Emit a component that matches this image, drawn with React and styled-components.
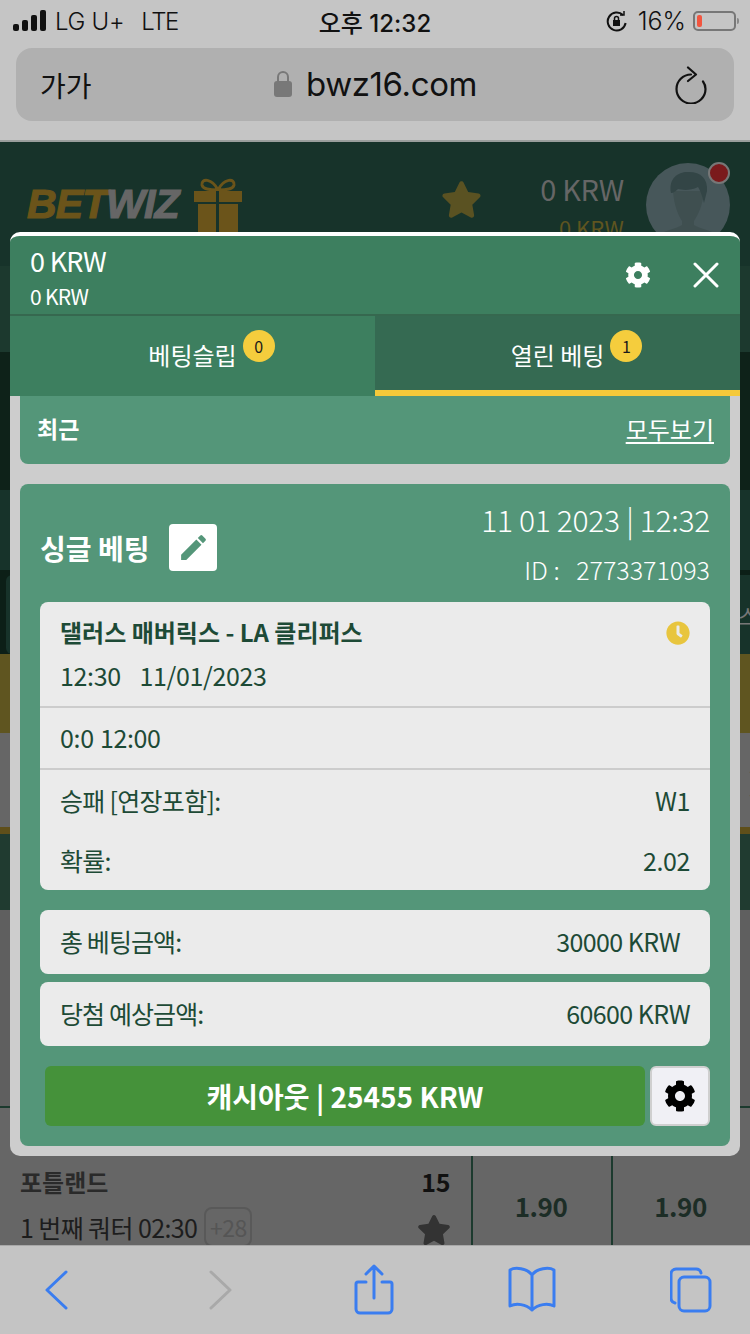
import React from "react";
import styled, { createGlobalStyle } from "styled-components";
import { FaCog, FaStar, FaClock } from "react-icons/fa";
import { MdEdit } from "react-icons/md";

const KR = `"Noto Sans CJK KR", "Noto Sans", sans-serif`;
const IOS = `Inter, "Noto Sans CJK KR", sans-serif`;
const BLUE = "#3a7df0";

const Global = createGlobalStyle`
  html, body { margin: 0; padding: 0; background: #666; }
  * { box-sizing: border-box; }
`;

const Screen = styled.div`
  position: relative;
  width: 750px;
  height: 1334px;
  display: flex;
  flex-direction: column;
  overflow: hidden;
  font-family: ${KR};
`;

/* ---------- safari chrome ---------- */
const Chrome = styled.div`
  height: 142px;
  flex: none;
  background: #c5c5c5;
  border-bottom: 2px solid #9a9e9c;
  padding: 0 16px;
  font-family: ${IOS};
  color: #111;
`;
const StatusBar = styled.div`
  height: 48px;
  display: grid;
  grid-template-columns: 1fr auto 1fr;
  align-items: center;
  padding-bottom: 6px;
  font-size: 24px;
`;
const StatusLeft = styled.div`
  display: flex;
  align-items: center;
  margin-left: -3px;
  gap: 9px;
  font-weight: 300;
`;
const Carrier = styled.span`
  letter-spacing: -0.3px;
  margin-right: 8px;
`;
const Network = styled.span`
  letter-spacing: -1.4px;
`;
const Clock = styled.div`
  font-weight: 500;
  font-size: 24px;
`;
const StatusRight = styled.div`
  display: flex;
  align-items: center;
  justify-content: flex-end;
  gap: 7px;
  margin-right: -2px;
  font-weight: 300;
  font-size: 25px;
`;
const RotationLock = styled.svg`
  margin-right: 4px;
`;
const Battery = styled.div`
  position: relative;
  width: 43px;
  height: 20px;
  border: 2px solid #777;
  border-radius: 5px;
  padding: 2px;
  &::after {
    content: "";
    position: absolute;
    right: -5px;
    top: 5px;
    width: 2px;
    height: 6px;
    background: #888;
    border-radius: 0 2px 2px 0;
  }
`;
const BatteryLevel = styled.div`
  width: 5px;
  height: 100%;
  background: #f2553f;
  border-radius: 2px;
`;
const UrlBar = styled.div`
  height: 73px;
  background: #b0b0b0;
  border-radius: 16px;
  display: flex;
  align-items: center;
  justify-content: space-between;
  padding: 0 27px 0 24px;
`;
const TextSize = styled.span`
  font-family: ${KR};
  font-size: 28px;
  white-space: nowrap;
  width: 50px;
  flex: none;
`;
const Address = styled.div`
  display: flex;
  align-items: center;
  gap: 14px;
  font-size: 33px;
  font-weight: 400;
  letter-spacing: -0.4px;
  margin: -2px 14px 0 0;
`;

/* ---------- dimmed page behind the modal ---------- */
const Backdrop = styled.div`
  flex: 1;
  min-height: 0;
  overflow: hidden;
  display: flex;
  flex-direction: column;
`;
const Band = styled.div`
  flex: none;
  height: ${(p) => p.$h}px;
  background: ${(p) => p.$bg};
  display: flex;
  overflow: hidden;
  justify-content: ${(p) => p.$end ? "flex-end" : "flex-start"};
  align-items: ${(p) => p.$end ? "center" : "stretch"};
`;
const SiteHeader = styled.div`
  height: 124px;
  flex: none;
  background: #17332a;
  display: flex;
  padding: 36px 20px 0 27px;
  position: relative;
`;
const Logo = styled.div`
  font-family: "Liberation Sans", sans-serif;
  font-style: italic;
  font-weight: 700;
  font-size: 41px;
  line-height: 52px;
  letter-spacing: -0.9px;
  color: #666;
  -webkit-text-stroke: 1.2px currentColor;
  height: 52px;
`;
const LogoAccent = styled.span`
  color: #6b541a;
`;
const GiftIcon = styled.svg`
  width: 50px;
  height: 54px;
  margin-left: 14px;
  flex: none;
`;
const HeadStar = styled.div`
  color: #5a5222;
  font-size: 41px;
  line-height: 1;
  margin-left: 198px;
  margin-top: 1px;
  flex: none;
`;
const Balance = styled.div`
  width: 142px;
  text-align: right;
  flex: none;
  margin-top: -5px;
`;
const BalanceMain = styled.div`
  font-size: 29px;
  line-height: 30px;
  letter-spacing: -0.4px;
  color: #666;
`;
const BalanceSub = styled.div`
  font-size: 22px;
  line-height: 30px;
  margin-top: 9px;
  color: #5f5520;
`;
const Avatar = styled.div`
  position: relative;
  width: 84px;
  height: 84px;
  margin: -15px 0 0 22px;
  flex: none;
`;
const Dot = styled.div`
  position: absolute;
  top: -1px;
  right: 0;
  width: 22px;
  height: 22px;
  border-radius: 50%;
  background: #7a1a1c;
  border: 2px solid #777;
`;
const SideBox = styled.div`
  flex: 1;
  margin: 5px 0 0 6px;
  background: #17332a;
  border-radius: 6px 0 0 6px;
  display: flex;
  justify-content: flex-end;
  align-items: center;
  color: #777;
  font-size: 22px;
`;
const Clipped = styled.span`
  margin-right: -8px;
  color: ${(p) => p.$color || "inherit"};
  font-size: ${(p) => p.$size || 22}px;
`;
const GameRow = styled.div`
  flex: none;
  height: 137px;
  background: #666;
  display: grid;
  grid-template-columns: 471px 140px 139px;
`;
const GameInfo = styled.div`
  display: grid;
  grid-template-columns: 1fr auto;
  grid-auto-rows: 46px;
  align-items: center;
  padding: 51px 21px 0 20px;
  margin-top: -1px;
  color: #1d1d1d;
  font-size: 25px;
`;
const GameName = styled.div`
  font-weight: 700;
  font-size: 24px;
  color: #2a2a2a;
`;
const GameScore = styled.div`
  font-weight: 700;
  font-size: 25px;
  letter-spacing: -0.4px;
  color: #111;
  text-align: right;
`;
const GameTime = styled.div`
  display: flex;
  align-items: center;
  gap: 7px;
  letter-spacing: -0.6px;
  white-space: nowrap;
`;
const More = styled.span`
  border: 2px solid #595959;
  color: #555;
  border-radius: 8px;
  padding: 0 2px;
  font-size: 23px;
  line-height: 36px;
  height: 40px;
  width: 48px;
  text-align: center;
`;
const RowStar = styled.div`
  color: #333;
  font-size: 34px;
  line-height: 1;
  margin: 8px -1px 0 0;
`;
const Odd = styled.div`
  border-left: 2px solid #1c3a2e;
  display: flex;
  justify-content: center;
  font-weight: 700;
  font-size: 26px;
  letter-spacing: -0.5px;
  color: #1c2d26;
  padding-top: 80px;
  padding-right: 2px;
  line-height: 36px;
`;

/* ---------- bottom toolbar ---------- */
const Toolbar = styled.div`
  height: 89px;
  flex: none;
  background: #c4c4c4;
  border-top: 1px solid #a8a8a8;
  display: flex;
  align-items: center;
  justify-content: space-between;
  padding: 0 36px 0 36px;
`;
const ToolIcon = styled.svg`
  width: ${(p) => p.$w || 44}px;
  height: 52px;
  fill: none;
  stroke: ${(p) => p.$muted ? "#a9a9a9" : BLUE};
  stroke-width: 3;
  stroke-linecap: round;
  stroke-linejoin: round;
`;

/* ---------- modal ---------- */
const Modal = styled.div`
  position: absolute;
  left: 10px;
  top: 232px;
  width: 730px;
  height: 924px;
  background: #cdcdcd;
  border-top: 4px solid #fff;
  border-radius: 10px;
  overflow: hidden;
  display: flex;
  flex-direction: column;
`;
const ModalHead = styled.div`
  height: 78px;
  flex: none;
  background: #3d7f5f;
  color: #fff;
  display: flex;
  align-items: center;
  justify-content: space-between;
  padding: 0 21px 0 20px;
`;
const HeadBalance = styled.div`
  padding-top: 6px;
`;
const HeadMain = styled.div`
  font-size: 27px;
  line-height: 32px;
  letter-spacing: -0.7px;
  margin-top: -2px;
`;
const HeadSub = styled.div`
  font-size: 21px;
  line-height: 26px;
  letter-spacing: -0.7px;
  margin-top: 6px;
`;
const HeadActions = styled.div`
  display: flex;
  align-items: center;
  gap: 42px;
  margin-top: -1px;
  font-size: 26px;
  line-height: 0;
`;
const Tabs = styled.div`
  height: 82px;
  flex: none;
  display: grid;
  grid-template-columns: 1fr 1fr;
`;
const Tab = styled.div`
  background: ${(p) => p.$active ? "#356a52" : "#3d7f5f"};
  border-top: 2px solid #36684f;
  border-bottom: 6px solid ${(p) => p.$active ? "#f5c93a" : "#3d7f5f"};
  color: #fff;
  font-size: 24px;
  display: flex;
  justify-content: center;
  padding-top: 21px;
`;
const TabLabel = styled.span`
  position: relative;
  height: 36px;
  line-height: 36px;
`;
const Badge = styled.span`
  position: absolute;
  left: calc(100% + 6px);
  top: -7px;
  width: 32px;
  height: 32px;
  border-radius: 50%;
  background: #f5cd3d;
  color: #1a1a1a;
  font-size: 16px;
  display: flex;
  align-items: center;
  justify-content: center;
`;
const Body = styled.div`
  flex: 1;
  padding: 0 10px 10px;
  display: flex;
  flex-direction: column;
  gap: 20px;
`;
const RecentBar = styled.div`
  height: 68px;
  flex: none;
  background: #549679;
  border-radius: 0 0 8px 8px;
  color: #fff;
  display: flex;
  align-items: center;
  justify-content: space-between;
  padding: 0 16px 4px 17px;
`;
const RecentTitle = styled.span`
  font-weight: 700;
  font-size: 23px;
`;
const RecentLink = styled.a`
  font-size: 24px;
  text-decoration: underline;
  text-underline-offset: 3px;
`;
const BetCard = styled.div`
  flex: 1;
  background: #549679;
  border-radius: 8px;
  padding: 0 20px;
  display: flex;
  flex-direction: column;
`;
const BetHead = styled.div`
  height: 118px;
  flex: none;
  display: flex;
  justify-content: space-between;
  align-items: flex-start;
  color: #fff;
`;
const BetTitleRow = styled.div`
  display: flex;
  align-items: center;
  gap: 20px;
  margin-top: 40px;
`;
const BetTitle = styled.span`
  font-weight: 700;
  font-size: 28px;
`;
const EditButton = styled.div`
  width: 48px;
  height: 47px;
  border-radius: 4px;
  background: #fff;
  color: #549679;
  font-size: 33px;
  display: flex;
  align-items: center;
  justify-content: center;
`;
const BetMeta = styled.div`
  text-align: right;
  padding-top: 14px;
`;
const BetDate = styled.div`
  font-size: 30px;
  line-height: 42px;
  letter-spacing: -0.3px;
  font-weight: 300;
`;
const BetId = styled.div`
  font-size: 25px;
  line-height: 36px;
  margin-top: 11px;
  font-weight: 300;
  white-space: pre;
`;
const InfoCard = styled.div`
  height: 288px;
  flex: none;
  background: #ebebeb;
  border-radius: 8px;
  color: #1d4a36;
  display: flex;
  flex-direction: column;
`;
const InfoSection = styled.div`
  padding: 0 20px;
  height: ${(p) => p.$h}px;
  flex: none;
  border-bottom: ${(p) => p.$line ? "2px solid #cccccc" : "0"};
`;
const MatchRow = styled.div`
  display: flex;
  justify-content: space-between;
  align-items: center;
  height: 58px;
`;
const MatchName = styled.span`
  font-weight: 700;
  font-size: 24px;
`;
const ClockIcon = styled.span`
  font-size: 24px;
  line-height: 0;
  margin-top: 3px;
  color: #e8c53e;
`;
const InfoLine = styled.div`
  font-size: 25px;
  line-height: ${(p) => p.$lh}px;
  letter-spacing: -0.35px;
  word-spacing: 1px;
  white-space: pre;
`;
const PairRow = styled.div`
  display: flex;
  justify-content: space-between;
  align-items: center;
  height: ${(p) => p.$h}px;
  font-size: 25px;
  letter-spacing: -0.4px;
`;
const PairLabel = styled.span`
  letter-spacing: -0.7px;
`;
const AmountCard = styled.div`
  height: 64px;
  flex: none;
  margin-top: ${(p) => p.$mt}px;
  background: #ebebeb;
  border-radius: 8px;
  color: #1d4a36;
  display: flex;
  justify-content: space-between;
  align-items: center;
  font-size: 25px;
  letter-spacing: -0.6px;
  padding: 0 ${(p) => p.$pr}px 2px 20px;
`;
const AmountLabel = styled.span`
  letter-spacing: -0.9px;
`;
const ActionRow = styled.div`
  display: flex;
  gap: 5px;
  margin: 20px 0 0 5px;
`;
const CashoutButton = styled.button`
  width: 600px;
  height: 60px;
  border: 0;
  border-radius: 6px;
  background: #45923a;
  color: #fff;
  font-family: ${KR};
  font-weight: 700;
  font-size: 28px;
  padding: 0;
`;
const CogButton = styled.button`
  width: 60px;
  height: 60px;
  border: 2px solid #cfcfcf;
  border-radius: 6px;
  background: #f0f0f5;
  color: #000;
  font-size: 32px;
  display: flex;
  align-items: center;
  justify-content: center;
  padding: 0;
`;

export default function App() {
  return (
    <Screen>
      <Global />
      <Chrome>
        <StatusBar>
          <StatusLeft>
            <svg width="33" height="22" viewBox="0 0 33 22" fill="#111">
              <rect x="0" y="14" width="6" height="7" rx="2" />
              <rect x="9" y="10" width="6" height="11" rx="2" />
              <rect x="18" y="5" width="6" height="16" rx="2" />
              <rect x="27" y="0" width="6" height="21" rx="2" />
            </svg>
            <Carrier>LG U+</Carrier>
            <Network>LTE</Network>
          </StatusLeft>
          <Clock>오후 12:32</Clock>
          <StatusRight>
            <RotationLock width="21" height="22" viewBox="0 0 21 22" fill="none" stroke="#111" strokeWidth="2">
              <path d="M17 5a9 9 0 1 0 2.6 8" />
              <path d="M14 5h4V1" strokeWidth="1.5" />
              <rect x="7" y="10" width="7" height="6" fill="#111" stroke="none" />
              <path d="M8.5 10V8.5a2 2 0 0 1 4 0V10" strokeWidth="1.5" />
            </RotationLock>
            <span>16%</span>
            <Battery>
              <BatteryLevel />
            </Battery>
          </StatusRight>
        </StatusBar>
        <UrlBar>
          <TextSize>가가</TextSize>
          <Address>
            <svg width="18" height="28" viewBox="0 0 18 28">
              <path d="M4 13V7a5 5 0 0 1 10 0v6" fill="none" stroke="#787878" strokeWidth="2" />
              <rect x="0" y="11" width="18" height="16" rx="3" fill="#787878" />
            </svg>
            <span>bwz16.com</span>
          </Address>
          <svg width="32" height="38" viewBox="0 0 32 38" fill="none" stroke="#111" strokeWidth="2.2" strokeLinecap="round" strokeLinejoin="round">
            <path d="M16 8.5a14.5 14.5 0 1 0 14.5 14.5c0-3-1-5.5-2.5-7.5" />
            <path d="M13 1.5l8 7-8 6.5" />
          </svg>
        </UrlBar>
      </Chrome>

      <Backdrop>
        <SiteHeader>
          <Logo>
            <LogoAccent>BET</LogoAccent>WIZ
          </Logo>
          <GiftIcon viewBox="0 0 50 54">
            <path d="M25 12C19 0 8 0 9 7c1 5 10 5 16 5zm0 0C31 0 42 0 41 7c-1 5-10 5-16 5z" fill="none" stroke="#6b541a" strokeWidth="3" />
            <rect x="1" y="13" width="48" height="11" fill="#6b541a" />
            <rect x="5" y="26" width="40" height="28" fill="#6b541a" />
            <rect x="23" y="13" width="3" height="41" fill="#17332a" />
          </GiftIcon>
          <HeadStar>
            <FaStar />
          </HeadStar>
          <Balance>
            <BalanceMain>0 KRW</BalanceMain>
            <BalanceSub>0 KRW</BalanceSub>
          </Balance>
          <Avatar>
            <svg width="84" height="84" viewBox="0 0 84 84">
              <circle cx="42" cy="42" r="42" fill="#47575a" />
              <path d="M27 28c1 14 5 24 9 30v4c-6 4-16 5-22 9a42 42 0 0 0 56 0c-6-4-16-5-22-9v-4c4-6 9-16 10-30z" fill="#3f4f50" />
              <path d="M25 30C22 14 34 8 43 9c12 0 19 7 18 19l-3 12c-2-8-4-13-6-16-8 4-16 3-20 2-4 4-6 4-7 4z" fill="#334546" />
            </svg>
            <Dot />
          </Avatar>
        </SiteHeader>
        <Band $h={86} $bg="#1c392e" />
        <Band $h={138} $bg="#0e2219" />
        <Band $h={80} $bg="#17332a" />
        <Band $h={84} $bg="#0c1f17">
          <SideBox>
            <Clipped>스</Clipped>
          </SideBox>
        </Band>
        <Band $h={79} $bg="#5f5520" />
        <Band $h={94} $bg="#666666" $end>
          <Clipped $color="#222" $size={26}>]</Clipped>
        </Band>
        <Band $h={7} $bg="#5f4f1a" />
        <Band $h={76} $bg="#203b30" />
        <Band $h={196} $bg="#5f5f5f" />
        <Band $h={2} $bg="#1c3a2e" />
        <GameRow>
          <GameInfo>
            <GameName>포틀랜드</GameName>
            <GameScore>15</GameScore>
            <GameTime>
              1 번째 쿼터 02:30 <More>+28</More>
            </GameTime>
            <RowStar>
              <FaStar />
            </RowStar>
          </GameInfo>
          <Odd>1.90</Odd>
          <Odd>1.90</Odd>
        </GameRow>
      </Backdrop>

      <Toolbar>
        <ToolIcon viewBox="0 0 44 52">
          <path d="M30 8L11 26l19 18" />
        </ToolIcon>
        <ToolIcon viewBox="-4 0 44 52" $muted>
          <path d="M14 8l19 18-19 18" />
        </ToolIcon>
        <ToolIcon viewBox="-2 0 44 52">
          <path d="M14 18H6a2 2 0 0 0-2 2v25a4 4 0 0 0 4 4h28a4 4 0 0 0 4-4V20a2 2 0 0 0-2-2h-8" />
          <path d="M22 34V2M14 10l8-8 8 8" />
        </ToolIcon>
        <ToolIcon viewBox="0 0 50 52" $w={50}>
          <path d="M25 11C20 4 8 3 3 6v36c6-3 16-2 22 4 6-6 16-7 22-4V6c-5-3-17-2-22 5zM25 11v35" />
        </ToolIcon>
        <ToolIcon viewBox="2 0 44 52">
          <path d="M33 9a5 5 0 0 0-5-4H8a5 5 0 0 0-5 5v24a5 5 0 0 0 4 5" />
          <rect x="11" y="13" width="31" height="34" rx="5" />
        </ToolIcon>
      </Toolbar>

      <Modal>
        <ModalHead>
          <HeadBalance>
            <HeadMain>0 KRW</HeadMain>
            <HeadSub>0 KRW</HeadSub>
          </HeadBalance>
          <HeadActions>
            <FaCog />
            <svg width="26" height="26" viewBox="0 0 26 26" stroke="#fff" strokeWidth="3" strokeLinecap="round">
              <path d="M2 2l22 22M24 2L2 24" />
            </svg>
          </HeadActions>
        </ModalHead>
        <Tabs>
          <Tab>
            <TabLabel>
              베팅슬립
              <Badge>0</Badge>
            </TabLabel>
          </Tab>
          <Tab $active>
            <TabLabel>
              열린 베팅
              <Badge>1</Badge>
            </TabLabel>
          </Tab>
        </Tabs>
        <Body>
          <RecentBar>
            <RecentTitle>최근</RecentTitle>
            <RecentLink>모두보기</RecentLink>
          </RecentBar>
          <BetCard>
            <BetHead>
              <BetTitleRow>
                <BetTitle>싱글 베팅</BetTitle>
                <EditButton>
                  <MdEdit />
                </EditButton>
              </BetTitleRow>
              <BetMeta>
                <BetDate>11 01 2023 | 12:32</BetDate>
                <BetId>{"ID :   2773371093"}</BetId>
              </BetMeta>
            </BetHead>
            <InfoCard>
              <InfoSection $h={106} $line>
                <MatchRow>
                  <MatchName>댈러스 매버릭스 - LA 클리퍼스</MatchName>
                  <ClockIcon>
                    <FaClock />
                  </ClockIcon>
                </MatchRow>
                <InfoLine $lh={30}>{"12:30   11/01/2023"}</InfoLine>
              </InfoSection>
              <InfoSection $h={62} $line>
                <InfoLine $lh={58}>0:0 12:00</InfoLine>
              </InfoSection>
              <InfoSection $h={120}>
                <PairRow $h={60}>
                  <PairLabel>승패 [연장포함]:</PairLabel>
                  <span>W1</span>
                </PairRow>
                <PairRow $h={60}>
                  <PairLabel>확률:</PairLabel>
                  <span>2.02</span>
                </PairRow>
              </InfoSection>
            </InfoCard>
            <AmountCard $mt={20} $pr={30}>
              <AmountLabel>총 베팅금액:</AmountLabel>
              <span>30000 KRW</span>
            </AmountCard>
            <AmountCard $mt={8} $pr={20}>
              <AmountLabel>당첨 예상금액:</AmountLabel>
              <span>60600 KRW</span>
            </AmountCard>
            <ActionRow>
              <CashoutButton>캐시아웃 | 25455 KRW</CashoutButton>
              <CogButton>
                <FaCog />
              </CogButton>
            </ActionRow>
          </BetCard>
        </Body>
      </Modal>
    </Screen>
  );
}
